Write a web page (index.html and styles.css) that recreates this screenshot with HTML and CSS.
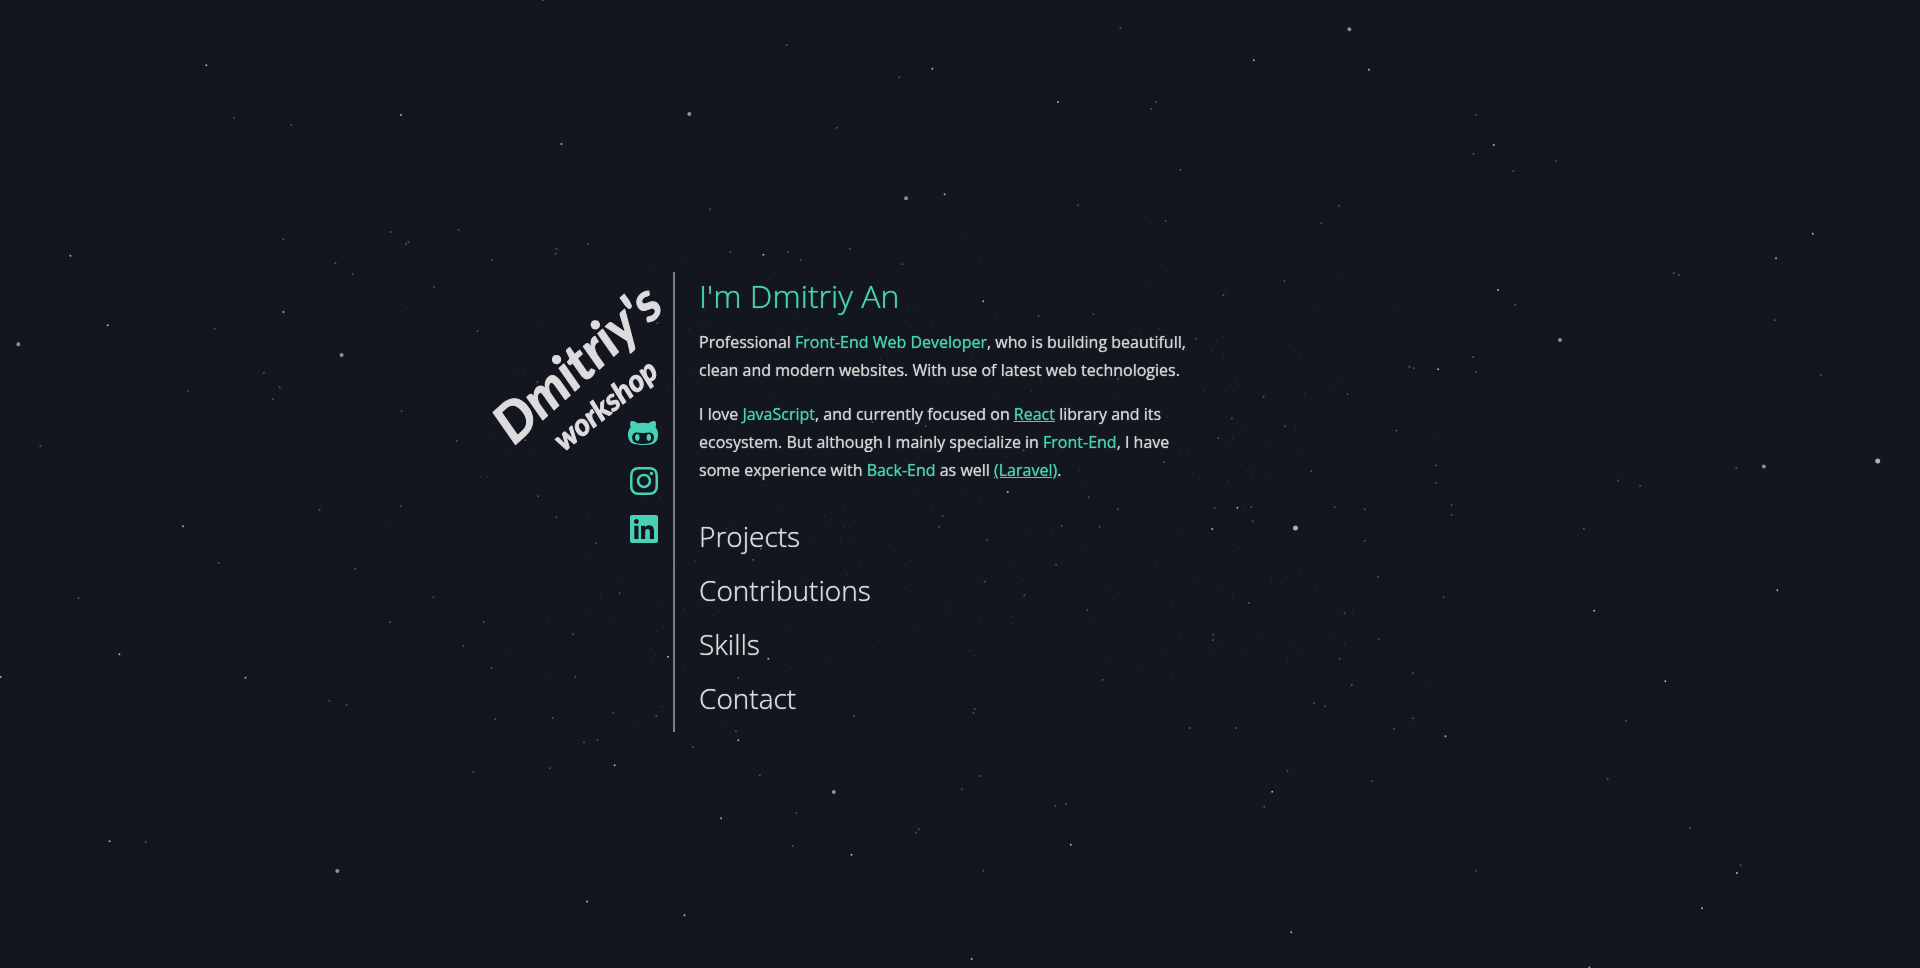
FILE: index.html
```html
<!DOCTYPE html>
<html lang="en">
<head>
<meta charset="utf-8">
<meta name="viewport" content="width=device-width, initial-scale=1">
<title>Dmitriy's workshop</title>
<link rel="stylesheet" href="styles.css">
</head>
<body>
<svg class="sky" viewBox="0 0 1920 968" preserveAspectRatio="xMidYMid slice" aria-hidden="true">
  <g transform="scale(.6122 .3333)">
    <path class="star star-l" d="M558 1065h0M30 1033h0M1480 595h0M1126 342h0"/>
    <path class="star star-m" d="M337 196h0M655 345h0M115 767h0M176 976h0M917 432h0M463 936h0M1247 764h0M1543 583h0M1523 206h0"/>
    <path class="star star-s" d="M887 1h0M1285 135h0M1469 232h0M382 353h0M476 375h0M1367 383h0M1160 628h0M638 696h0M463 718h0M749 690h0M667 726h0M663 732h0M961 732h0M909 746h0M908 761h0M804 781h0M576 823h0M548 790h0M709 861h0M780 994h0M351 986h0M431 1119h0M457 1162h0M307 1173h0M446 1198h0M656 1234h0M66 1339h0M746 1323h0M858 1321h0M878 1146h0M1287 757h0M1308 779h0M1388 746h0M1193 757h0M1474 793h0M1074 969h0M1512 1278h0M1425 1267h0"/>
    <path class="star star-f" d="M665 923h0M885 981h0M1112 777h0M1070 800h0M842 1127h0M857 1123h0M1067 1200h0M1092 1160h0M1108 1141h0M804 1273h0M802 1318h0M825 1361h0M873 1350h0M785 1432h0M796 1431h0M882 1440h0M1022 1332h0M1080 1282h0M1019 1390h0M1125 988h0M1145 973h0M1158 978h0M1268 1003h0M1299 945h0M1255 838h0M1297 865h0M1479 963h0M1484 919h0M1500 918h0M1523 972h0M1438 1078h0M1176 1183h0M1265 1183h0M1376 1207h0M1549 1147h0M1159 1134h0M1129 1122h0M1174 1270h0M1199 1287h0"/>
  </g>
  <g transform="translate(960 0) scale(.6122 .3333)">
    <path class="star star-xl" d="M1499 1383h0"/>
    <path class="star star-l" d="M636 88h0M980 1020h0M1313 1400h0"/>
    <path class="star star-m" d="M668 209h0M160 306h0M872 435h0M1393 701h0M1333 775h0M879 870h0M781 1108h0M38 904h0M480 181h0"/>
    <path class="star star-s" d="M262 83h0M320 306h0M312 326h0M843 345h0M839 461h0M974 483h0M904 513h0M360 509h0M193 616h0M336 662h0M619 618h0M590 670h0M530 843h0M430 886h0M1166 819h0M1174 825h0M907 914h0M1331 961h0M1406 1125h0M838 1071h0M843 1115h0M734 1100h0M741 1105h0M128 948h0M218 943h0M386 1016h0M258 1137h0M496 1190h0M444 1256h0M422 1315h0M531 1278h0M713 1292h0M633 1183h0M778 1397h0M574 1414h0M333 1387h0M1268 1405h0M1075 1442h0M777 1449h0M104 1352h0"/>
    <path class="star star-f" d="M8 710h0M33 776h0M302 651h0M328 797h0M303 857h0M433 871h0M536 772h0M618 820h0M664 865h0M709 914h0M584 922h0M82 912h0M59 940h0M277 995h0M295 998h0M325 986h0M430 1013h0M420 1023h0M412 1054h0M430 1064h0M429 1081h0M538 1034h0M555 1075h0M442 1156h0M455 1156h0M450 1140h0M606 1171h0M618 1147h0M563 1181h0M731 1152h0M259 1183h0M117 1174h0M133 1147h0M56 1186h0M398 1174h0M340 1228h0M339 1252h0M366 1284h0M54 1288h0M462 1295h0M445 1315h0M443 1336h0M523 1312h0M548 1288h0M505 1339h0M560 1361h0M360 1352h0M373 1357h0M303 1393h0M401 1393h0M480 1397h0M470 1414h0M478 1430h0M501 1436h0M391 1436h0M438 1442h0M195 1411h0M206 1442h0M74 1370h0M685 1441h0M773 1312h0M202 1050h0M19 1076h0"/>
  </g>
  <g transform="translate(0 484) scale(.6122 .3333)">
    <path class="star star-l" d="M1362 924h0M551 1161h0"/>
    <path class="star star-m" d="M299 127h0M195 511h0M401 581h0M179 1072h0M1 579h0M1091 518h0M1255 524h0M1004 844h0M959 1253h0M1118 1294h0M1391 1112h0M1206 769h0M1178 1003h0"/>
    <path class="star star-s" d="M128 343h0M357 237h0M522 78h0M655 67h0M879 37h0M909 100h0M580 254h0M637 415h0M790 414h0M757 486h0M936 450h0M940 578h0M708 340h0M538 650h0M566 663h0M238 1074h0M803 552h0M1012 328h0M974 178h0M1072 695h0M1002 686h0M976 769h0M954 775h0M898 853h0M773 865h0M903 702h0M809 706h0M1241 874h0M1301 986h0M1501 1036h0M1496 1046h0M1295 1086h0M1395 697h0M1206 582h0M1230 227h0M1243 194h0M1540 97h0M1534 128h0M1132 790h0M1202 742h0"/>
    <path class="star star-f" d="M635 121h0M960 88h0M964 223h0M1015 289h0M981 340h0M956 387h0M896 408h0M996 419h0M834 501h0M894 585h0M1084 430h0M1073 441h0M1064 495h0M1069 511h0M1064 529h0M1080 365h0M1081 668h0M1082 681h0M1036 712h0M1179 712h0M1118 544h0M1164 395h0M1147 369h0M1117 374h0M1055 44h0M1079 38h0M1252 3h0M1271 64h0M1378 66h0M1347 95h0M1355 109h0M1378 130h0M1388 130h0M1394 157h0M1329 167h0M1373 173h0M1451 182h0M1477 118h0M1523 76h0M1493 29h0M1405 232h0M1488 230h0M1381 263h0M1384 271h0M1372 274h0M1315 278h0M1478 313h0M1553 366h0M1553 382h0M1494 441h0M1436 469h0M1286 431h0M1333 479h0M1351 530h0M1283 541h0M1291 552h0M1440 588h0M1215 109h0M1187 134h0M1198 112h0M1136 230h0M1105 232h0M1172 284h0M1266 624h0"/>
  </g>
  <g transform="translate(960 484) scale(.6122 .3333)">
    <path class="star star-xl" d="M548 132h0"/>
    <path class="star star-m" d="M453 71h0M412 135h0M1036 380h0M1152 592h0M510 923h0M541 1345h0M181 1082h0M1269 1167h0M1028 1451h0M1335 319h0M1212 1273h0M793 757h0M19 1425h0M78 24h0"/>
    <path class="star star-s" d="M416 73h0M476 69h0M1111 6h0M803 63h0M803 93h0M1019 134h0M661 170h0M612 70h0M661 76h0M478 112h0M210 40h0M258 76h0M228 128h0M166 126h0M44 169h0M157 242h0M40 293h0M105 334h0M208 378h0M233 587h0M472 357h0M414 452h0M413 468h0M628 388h0M684 466h0M620 524h0M740 568h0M740 703h0M790 340h0M709 734h0M640 603h0M578 657h0M596 667h0M451 732h0M375 732h0M535 861h0M673 891h0M497 968h0M173 960h0M156 966h0M1088 710h0M1058 885h0M1192 1031h0M1275 1144h0M843 1160h0M38 1160h0M33 876h0M3 916h0M24 675h0M22 687h0M683 278h0"/>
    <path class="star star-f" d="M2 22h0M32 50h0M463 70h0M151 142h0M105 148h0M205 186h0M455 192h0M364 151h0M80 236h0M102 287h0M43 290h0M320 247h0M383 296h0M423 308h0M445 339h0M509 293h0M524 295h0M555 264h0M582 321h0M243 323h0M251 346h0M347 353h0M84 398h0M86 420h0M33 406h0M211 415h0M360 458h0M422 486h0M414 503h0M485 463h0M545 480h0M468 515h0M558 515h0M535 533h0M610 446h0M628 482h0M641 388h0M337 507h0M242 539h0M298 556h0M346 572h0M22 515h0M15 501h0M767 601h0M742 717h0"/>
  </g>
</svg>

<main class="page">
  <header class="side">
    <a class="logo" href="#" aria-label="Dmitriy's workshop">
      <svg class="logo-art" viewBox="0 0 193 184">
        <text class="logo-name" transform="translate(34 174) rotate(-42)">Dmitriy's</text>
        <text class="logo-sub" transform="translate(84 180) rotate(-39)">workshop</text>
      </svg>
    </a>
    <nav class="social" aria-label="Social links">
      <a class="social-link" href="#" aria-label="GitHub"><svg class="icon" viewBox="0 0 480 512"><path d="M186.100 328.700c0 20.900-10.900 55.100-36.700 55.100s-36.700-34.200-36.700-55.100 10.900-55.100 36.700-55.100 36.700 34.200 36.700 55.100zM480 278.200c0 31.900-3.200 65.700-17.500 95-37.900 76.600-142.100 74.800-216.700 74.800-75.800 0-186.200 2.700-225.600-74.800-14.600-29-20.200-63.100-20.200-95 0-41.900 13.900-81.500 41.500-113.600-5.200-15.800-7.700-32.400-7.700-48.800 0-21.500 4.900-32.300 14.600-51.800 45.300 0 74.300 9 108.800 36 29-6.900 58.800-10 88.700-10 27 0 54.200 2.900 80.400 9.200 34-26.700 63-35.200 107.800-35.200 9.800 19.500 14.600 30.300 14.600 51.800 0 16.400-2.600 32.700-7.700 48.200 27.500 32.400 39 72.300 39 114.200zm-64.300 50.500c0-43.900-26.700-82.600-73.500-82.600-18.900 0-37 3.400-56 6-14.900 2.300-29.800 3.200-45.100 3.200-15.200 0-30.100-.9-45.100-3.200-18.700-2.600-37-6-56-6-46.800 0-73.500 38.700-73.500 82.600 0 87.800 80.400 101.300 150.400 101.300h48.200c70.300 0 150.600-13.400 150.600-101.300zm-82.600-55.100c-25.800 0-36.700 34.200-36.700 55.100s10.900 55.100 36.700 55.100 36.700-34.200 36.700-55.100-10.900-55.100-36.700-55.100z"/></svg></a>
      <a class="social-link" href="#" aria-label="Instagram"><svg class="icon" viewBox="0 0 448 512"><path d="M224.100 141c-63.600 0-114.900 51.300-114.900 114.900s51.300 114.900 114.900 114.900S339 319.500 339 255.900 287.700 141 224.100 141zm0 189.600c-41.100 0-74.700-33.500-74.700-74.700s33.500-74.700 74.700-74.700 74.700 33.500 74.700 74.700-33.600 74.700-74.700 74.700zm146.400-194.300c0 14.900-12 26.800-26.800 26.800-14.900 0-26.800-12-26.800-26.800s12-26.800 26.800-26.800 26.800 12 26.800 26.800zm76.100 27.200c-1.700-35.900-9.900-67.700-36.200-93.900-26.200-26.200-58-34.400-93.900-36.200-37-2.100-147.900-2.100-184.900 0-35.800 1.700-67.600 9.900-93.900 36.100s-34.400 58-36.200 93.900c-2.100 37-2.100 147.900 0 184.900 1.700 35.900 9.900 67.700 36.200 93.900s58 34.400 93.900 36.200c37 2.100 147.900 2.100 184.900 0 35.900-1.700 67.700-9.900 93.900-36.200 26.200-26.200 34.400-58 36.200-93.900 2.100-37 2.100-147.800 0-184.800zM398.800 388c-7.800 19.600-22.900 34.700-42.600 42.600-29.500 11.700-99.500 9-132.100 9s-102.700 2.600-132.100-9c-19.600-7.800-34.700-22.900-42.600-42.600-11.700-29.500-9-99.500-9-132.100s-2.600-102.700 9-132.100c7.800-19.600 22.900-34.700 42.600-42.600 29.500-11.700 99.500-9 132.100-9s102.700-2.600 132.100 9c19.600 7.800 34.700 22.900 42.600 42.600 11.700 29.500 9 99.500 9 132.100s2.700 102.700-9 132.100z"/></svg></a>
      <a class="social-link" href="#" aria-label="LinkedIn"><svg class="icon" viewBox="0 0 448 512"><path d="M416 32H31.900C14.300 32 0 46.500 0 64.300v383.400C0 465.500 14.300 480 31.900 480H416c17.600 0 32-14.500 32-32.300V64.300c0-17.800-14.400-32.300-32-32.300zM135.400 416H69V202.200h66.500V416zm-33.200-243c-21.300 0-38.500-17.300-38.500-38.500S80.900 96 102.200 96c21.200 0 38.500 17.300 38.500 38.500 0 21.300-17.200 38.500-38.500 38.500zm282.100 243h-66.400V312c0-24.800-.5-56.700-34.500-56.700-34.600 0-39.900 27-39.900 54.900V416h-66.400V202.200h63.700v29.200h.9c8.900-16.800 30.600-34.500 62.900-34.500 67.200 0 79.700 44.300 79.700 101.900V416z"/></svg></a>
    </nav>
  </header>
  <div class="content">
    <h1 class="title">I'm Dmitriy An</h1>
    <p class="text">Professional <span class="mark">Front-End Web Developer</span>, who is building beautifull, clean and modern websites. With use of latest web technologies.</p>
    <p class="text">I love <span class="mark">JavaScript</span>, and currently focused on <a class="link" href="#">React</a> library and its ecosystem. But although I mainly specialize in <span class="mark">Front-End</span>, I have some experience with <span class="mark">Back-End</span> as well <a class="link" href="#">(Laravel)</a>.</p>
    <nav class="menu" aria-label="Main">
      <a class="menu-link" href="#">Projects</a>
      <a class="menu-link" href="#">Contributions</a>
      <a class="menu-link" href="#">Skills</a>
      <a class="menu-link" href="#">Contact</a>
    </nav>
  </div>
</main>
</body>
</html>
```
FILE: styles.css
```css
* { box-sizing: border-box; }

body {
  margin: 0;
  background: #13161e;
  color: #d3d3d3;
  font-family: "Open Sans", "Noto Sans", sans-serif;
  font-size: 16px;
  line-height: 28px;
}

.sky {
  position: fixed;
  inset: 0;
  width: 100%;
  height: 100%;
}

.star {
  fill: none;
  stroke: #a3aecd;
  stroke-linecap: round;
  vector-effect: non-scaling-stroke;
}
.star-xl { stroke-width: 5px; }
.star-l { stroke-width: 4px; opacity: .8; }
.star-m { stroke-width: 2px; }
.star-s { stroke-width: 2px; opacity: .4; }
.star-f { stroke-width: 1px; opacity: .35; }

.page {
  position: relative;
  display: flex;
  align-items: center;
  justify-content: center;
  max-width: 960px;
  min-height: 100vh;
  margin: 0 auto;
  padding-top: 36px;
}

.side {
  display: flex;
  flex: 0 0 193px;
  flex-direction: column;
  min-height: 460px;
}

.logo { display: block; }
.logo-art { display: block; width: 100%; overflow: visible; }
.logo-name,
.logo-sub {
  fill: #dcdcde;
  stroke: #dcdcde;
  stroke-width: 1px;
  stroke-linejoin: round;
  font-family: Lato, "Open Sans", sans-serif;
  font-style: italic;
  font-weight: 700;
}
.logo-name { font-size: 54px; }
.logo-sub { font-size: 30px; }

.social {
  display: flex;
  flex-direction: column;
  align-items: flex-end;
  gap: 16px;
  margin-top: -39px;
  padding-right: 15px;
}
.social-link { display: block; color: #48d1b5; }
.icon { display: block; height: 32px; fill: currentColor; }

.content {
  flex: 1;
  min-height: 460px;
  padding-left: 24px;
  border-left: 2px solid #7c7d80;
  text-shadow: 0 0 1px currentColor;
}

.title {
  margin: 0 0 8px;
  color: #48d1b5;
  font-size: 32px;
  font-weight: 300;
  line-height: 48px;
}

.text { max-width: 496px; margin: 0 0 16px; }
.mark, .link { color: #48d1b5; text-shadow: 0 0 1px currentColor; }

.menu {
  display: flex;
  flex-direction: column;
  align-items: flex-start;
  gap: 14px;
  padding-top: 16px;
}
.menu-link {
  color: #dcdcde;
  font-size: 28px;
  font-weight: 300;
  line-height: 40px;
  text-decoration: none;
  text-shadow: 0 0 1px currentColor;
}
```
